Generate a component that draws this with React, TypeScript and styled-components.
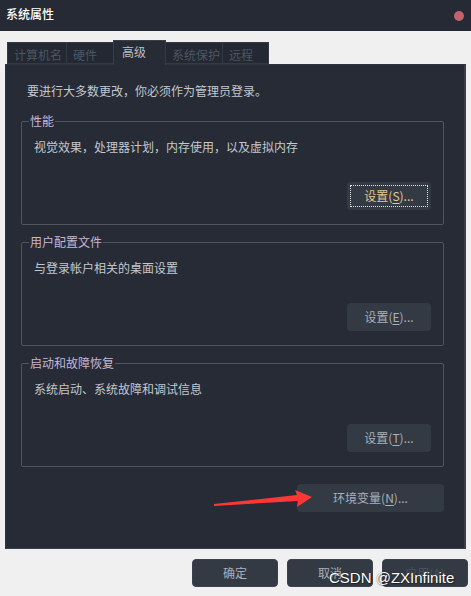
import React from "react";
import styled, { createGlobalStyle } from "styled-components";

const Global = createGlobalStyle`
  html, body { margin: 0; padding: 0; background: #f0f0f0; }
  body {
    font-family: "Noto Sans CJK SC", "Microsoft YaHei", "Noto Sans", sans-serif;
    font-size: 12px;
    -webkit-font-smoothing: antialiased;
  }
`;

const Window = styled.div`
  position: relative;
  width: 471px;
  height: 596px;
  background: #f0f0f0;
  display: flex;
  flex-direction: column;
  overflow: hidden;
`;

const TitleBar = styled.div`
  height: 31px;
  flex: none;
  background: #252a34;
  display: flex;
  align-items: center;
  justify-content: space-between;
  padding: 0 7px 4px 6px;
  box-sizing: border-box;
`;

const Title = styled.span`
  color: #ffffff;
  font-size: 12px;
  line-height: 16px;
  font-weight: 500;
`;

const CloseDot = styled.span`
  width: 10px;
  height: 10px;
  border-radius: 50%;
  background: #c4626b;
  margin-top: 4px;
`;

const TabRow = styled.div`
  display: flex;
  align-items: flex-end;
  margin: 9px 0 0 7px;
  height: 24px;
  position: relative;
  z-index: 1;
`;

const Tab = styled.div<{ $w: number; $active?: boolean }>`
  width: ${(p) => p.$w}px;
  box-sizing: border-box;
  height: ${(p) => (p.$active ? 25 : 22)}px;
  margin-bottom: ${(p) => (p.$active ? -1 : 0)}px;
  padding: ${(p) => (p.$active ? "3px 0 0 8px" : "4px 0 0 6px")};
  background: ${(p) => (p.$active ? "#262b35" : "#232832")};
  border: 1px solid ${(p) => (p.$active ? "#3a404a" : "#343a44")};
  border-bottom: ${(p) => (p.$active ? "none" : "1px solid #343a44")};
  border-left-width: ${(p) => (p.$active ? 1 : 1)}px;
  color: ${(p) => (p.$active ? "#b9bfc8" : "#4d5663")};
  font-size: 12px;
  line-height: 16px;
  white-space: nowrap;
  & + & { margin-left: -1px; }
`;

const Panel = styled.div`
  margin: 0 5px 0 5px;
  height: 485px;
  box-sizing: border-box;
  background: #262b35;
  border: 1px solid #2e343e;
  border-right: 2px solid #3a404a;
  border-bottom: 1px solid #3a404a;
  padding: 18px 20px 0 15px;
  display: flex;
  flex-direction: column;
`;

const Intro = styled.div`
  color: #c3c8d0;
  line-height: 16px;
  padding-left: 6px;
`;

const Group = styled.fieldset<{ $first?: boolean }>`
  margin: ${(p) => (p.$first ? 14 : 9)}px 0 0 0;
  padding: 0 0 14px 0;
  border: 1px solid #4f5661;
  border-radius: 2px;
  min-width: 0;
  display: flex;
  flex-direction: column;
`;

const Legend = styled.legend`
  margin-left: 7px;
  padding: 0 1px;
  line-height: 16px;
  color: #c9b5d6;
  font-size: 12px;
`;

const Desc = styled.div`
  margin-top: 10px;
  padding-left: 12px;
  line-height: 16px;
  color: #c3c8d0;
`;

const ButtonRow = styled.div<{ $mt: number; $pr: number }>`
  display: flex;
  justify-content: flex-end;
  margin-top: ${(p) => p.$mt}px;
  padding-right: ${(p) => p.$pr}px;
`;

const Btn = styled.button<{ $w: number; $focus?: boolean; $disabled?: boolean }>`
  position: relative;
  width: ${(p) => p.$w}px;
  height: 28px;
  border: none;
  border-radius: 4px;
  background: #333a44;
  color: ${(p) => (p.$focus ? "#e6c98e" : p.$disabled ? "#4a525e" : "#a9b0ba")};
  font-family: inherit;
  font-size: 12px;
  line-height: 16px;
  padding: 0;
  display: flex;
  align-items: center;
  justify-content: center;
  ${(p) =>
    p.$focus &&
    `
    &::after {
      content: "";
      position: absolute;
      inset: 3px;
      border: 1px dotted #e3e3e3;
    }
  `}
`;

const U = styled.span`
  text-decoration: underline;
  text-underline-offset: 2px;
`;

const Footer = styled.div`
  display: flex;
  justify-content: flex-end;
  gap: 9px;
  margin: 10px 3px 0 0;
`;

const FooterBtn = styled(Btn)`
  border: 1px solid #3b424d;
  box-sizing: border-box;
`;

const Watermark = styled.div`
  position: absolute;
  left: 329px;
  top: 570px;
  font-family: "Liberation Sans", Arial, sans-serif;
  font-size: 15px;
  line-height: 15px;
  color: #ffffff;
  text-shadow: 0 0 1px rgba(0, 0, 0, 0.7), 1px 1px 1px rgba(0, 0, 0, 0.4);
  white-space: nowrap;
`;

const Arrow = styled.svg`
  position: absolute;
  left: 0;
  top: 0;
  pointer-events: none;
`;

export default function App() {
  return (
    <>
      <Global />
      <Window>
        <TitleBar>
          <Title>系统属性</Title>
          <CloseDot />
        </TitleBar>
        <TabRow>
          <Tab $w={60}>计算机名</Tab>
          <Tab $w={48}>硬件</Tab>
          <Tab $w={53} $active>高级</Tab>
          <Tab $w={58}>系统保护</Tab>
          <Tab $w={47}>远程</Tab>
        </TabRow>
        <Panel>
          <Intro>要进行大多数更改，你必须作为管理员登录。</Intro>

          <Group $first>
            <Legend>性能</Legend>
            <Desc>视觉效果，处理器计划，内存使用，以及虚拟内存</Desc>
            <ButtonRow $mt={27} $pr={12}>
              <Btn $w={84} $focus>
                设置(<U>S</U>)...
              </Btn>
            </ButtonRow>
          </Group>

          <Group>
            <Legend>用户配置文件</Legend>
            <Desc>与登录帐户相关的桌面设置</Desc>
            <ButtonRow $mt={27} $pr={12}>
              <Btn $w={84}>
                设置(<U>E</U>)...
              </Btn>
            </ButtonRow>
          </Group>

          <Group>
            <Legend>启动和故障恢复</Legend>
            <Desc>系统启动、系统故障和调试信息</Desc>
            <ButtonRow $mt={27} $pr={12}>
              <Btn $w={84}>
                设置(<U>T</U>)...
              </Btn>
            </ButtonRow>
          </Group>

          <ButtonRow $mt={17} $pr={0}>
            <Btn $w={147}>
              环境变量(<U>N</U>)...
            </Btn>
          </ButtonRow>
        </Panel>
        <Footer>
          <FooterBtn $w={86}>确定</FooterBtn>
          <FooterBtn $w={86}>取消</FooterBtn>
          <FooterBtn $w={86} $disabled>
            应用(<U>A</U>)
          </FooterBtn>
        </Footer>

        <Arrow width="471" height="596" viewBox="0 0 471 596">
          <polygon
            points="214,504 297,495 295,490 312,497 297,507 298,501 214,506"
            fill="#ff3636"
          />
        </Arrow>
        <Watermark>CSDN @ZXInfinite</Watermark>
      </Window>
    </>
  );
}
